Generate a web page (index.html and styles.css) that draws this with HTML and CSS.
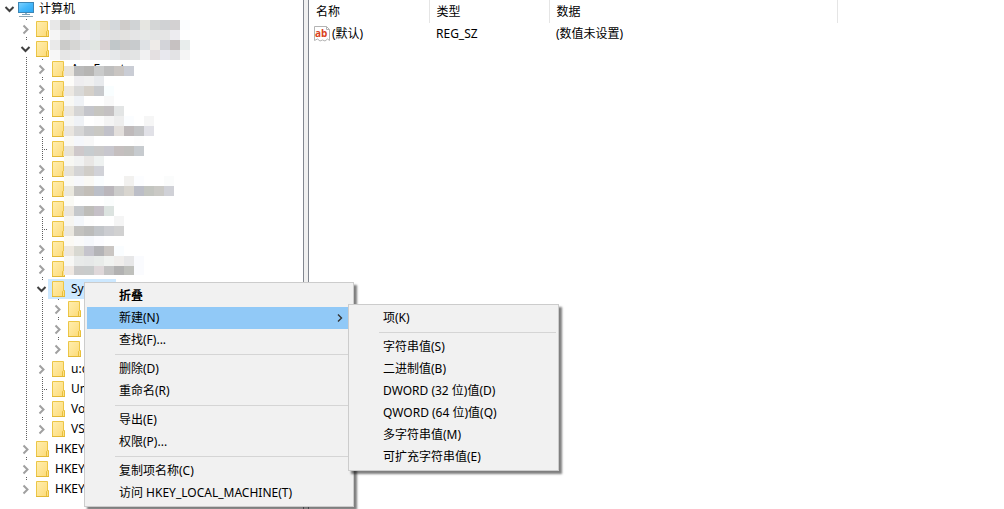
FILE: index.html
```html
<!DOCTYPE html>
<html lang="zh-CN">
<head>
    <meta charset="UTF-8">
    <meta name="viewport" content="width=device-width, initial-scale=1.0">
    <title>注册表编辑器</title>
    <link rel="stylesheet" href="styles.css">
</head>
<body>

    <!-- Shared icons -->
    <svg class="sprite" aria-hidden="true">
        <defs>
            <linearGradient id="folder-fill" x1="0" y1="0" x2="1" y2="1">
                <stop offset="0" stop-color="#ffeeb0"/>
                <stop offset="1" stop-color="#fddb78"/>
            </linearGradient>
            <linearGradient id="screen-fill" x1="0" y1="0" x2="1" y2="1">
                <stop offset="0" stop-color="#7fd2ff"/>
                <stop offset="0.5" stop-color="#45b8fb"/>
                <stop offset="1" stop-color="#2ba6f2"/>
            </linearGradient>
        </defs>
        <symbol id="folder" viewBox="0 0 16 16">
            <path d="M2.5 .5h11v9.5l-1 1v4.5h-10z" fill="url(#folder-fill)" stroke="#ecc646"/>
            <path d="M12.5 15.5v-5l1-1h1v6z" fill="#fde08a" stroke="#e8c03c"/>
            <path d="M2 15.5h13" stroke="#e3b935"/>
        </symbol>
        <symbol id="computer" viewBox="0 0 16 16">
            <rect x=".5" y="1.5" width="15" height="10" fill="url(#screen-fill)" stroke="#3d86b5"/>
            <path d="M7 12h2v1.5H7z" fill="#8fb3c8"/>
            <path d="M4 13.5h8" stroke="#7fa5bc"/>
            <path d="M1 15.5h14" stroke="#8da6b5"/>
        </symbol>
        <symbol id="closed" viewBox="0 0 16 16">
            <path d="M7.5 4.5l4 4-4 4" fill="none" stroke="#a0a0a0" stroke-width="2"/>
        </symbol>
        <symbol id="open" viewBox="0 0 16 16">
            <path d="M5.5 6l4 4 4-4" fill="none" stroke="#404040" stroke-width="2"/>
        </symbol>
    </svg>

    <main class="window">
        <nav class="tree-pane">
            <ul class="tree">
                <li>
                    <div class="row">
                        <button class="toggle" aria-label="折叠"><svg><use href="#open"/></svg></button>
                        <a class="label" href="#"><svg><use href="#computer"/></svg>计算机</a>
                    </div>
                    <ul>
                        <li>
                            <div class="row">
                                <button class="toggle" aria-label="展开"><svg><use href="#closed"/></svg></button>
                                <a class="label" href="#"><svg><use href="#folder"/></svg></a>
                            </div>
                        </li>
                        <li>
                            <div class="row">
                                <button class="toggle" aria-label="折叠"><svg><use href="#open"/></svg></button>
                                <a class="label" href="#"><svg><use href="#folder"/></svg></a>
                            </div>
                            <ul id="user-keys"></ul>
                        </li>
                        <li>
                            <div class="row">
                                <button class="toggle" aria-label="展开"><svg><use href="#closed"/></svg></button>
                                <a class="label" href="#"><svg><use href="#folder"/></svg>HKEY</a>
                            </div>
                        </li>
                        <li>
                            <div class="row">
                                <button class="toggle" aria-label="展开"><svg><use href="#closed"/></svg></button>
                                <a class="label" href="#"><svg><use href="#folder"/></svg>HKEY</a>
                            </div>
                        </li>
                        <li>
                            <div class="row">
                                <button class="toggle" aria-label="展开"><svg><use href="#closed"/></svg></button>
                                <a class="label" href="#"><svg><use href="#folder"/></svg>HKEY</a>
                            </div>
                        </li>
                    </ul>
                </li>
            </ul>
            <svg class="mosaic mosaic-roots" id="mosaic-roots" aria-hidden="true"></svg>
            <svg class="mosaic mosaic-keys" id="mosaic-keys" aria-hidden="true"></svg>
        </nav>

        <div class="splitter"></div>

        <section class="values-pane">
            <table class="values">
                <thead>
                    <tr>
                        <th class="col-name">名称</th>
                        <th class="col-type">类型</th>
                        <th class="col-data">数据</th>
                    </tr>
                </thead>
                <tbody>
                    <tr>
                        <td>
                            <div class="value-name">
                                <svg viewBox="0 0 16 16">
                                    <path d="M.5 .5h12l3 3v11l-2-1.5-2.5 2-2.5-1-2.5 1-2.5-2-3 1.500z" fill="#fff" stroke="#b4b4b4"/>
                                    <path d="M12.500 .5v3h3" fill="none" stroke="#b4b4b4"/>
                                    <text class="string-mark" x="1" y="11">ab</text>
                                </svg>
                                <span>(默认)</span>
                            </div>
                        </td>
                        <td>REG_SZ</td>
                        <td>(数值未设置)</td>
                    </tr>
                </tbody>
            </table>
        </section>
    </main>

    <!-- Context menu -->
    <ul class="menu context-menu">
        <li><button class="default">折叠</button></li>
        <li class="active">
            <button>新建(N)<svg class="arrow" viewBox="0 0 6 8"><path d="M1 .5l3.500 3.500L1 7.500" fill="none" stroke="#333" stroke-width="1.400"/></svg></button>
            <ul class="menu submenu">
                <li><button>项(K)</button></li>
                <li class="separator"></li>
                <li><button>字符串值(S)</button></li>
                <li><button>二进制值(B)</button></li>
                <li><button>DWORD (32 位)值(D)</button></li>
                <li><button>QWORD (64 位)值(Q)</button></li>
                <li><button>多字符串值(M)</button></li>
                <li><button>可扩充字符串值(E)</button></li>
            </ul>
        </li>
        <li><button>查找(F)...</button></li>
        <li class="separator"></li>
        <li><button>删除(D)</button></li>
        <li><button>重命名(R)</button></li>
        <li class="separator"></li>
        <li><button>导出(E)</button></li>
        <li><button>权限(P)...</button></li>
        <li class="separator"></li>
        <li><button>复制项名称(C)</button></li>
        <li><button>访问 HKEY_LOCAL_MACHINE(T)</button></li>
    </ul>

    <script src="script.js"></script>
</body>
</html>
```
FILE: styles.css
```css
* {
    box-sizing: border-box;
}

body {
    margin: 0;
    background: #fff;
    color: #000;
    font-family: "Noto Sans", "Noto Sans CJK SC", sans-serif;
    font-size: 12px;
    line-height: 20px;
    overflow: hidden;
}

ul {
    list-style: none;
    margin: 0;
    padding: 0;
}

button {
    font: inherit;
    color: inherit;
    background: none;
    border: none;
    padding: 0;
}

.sprite {
    position: absolute;
    width: 0;
    height: 0;
}

.window {
    display: flex;
    height: 100vh;
}

/* Key tree */
.tree-pane {
    position: relative;
    flex: 0 0 303px;
    overflow: hidden;
}

.tree {
    margin-top: -1px;
}

.tree ul {
    padding-left: 16px;
}

.tree ul > li {
    background: repeating-linear-gradient(#606060 0 1px, transparent 1px 2px) 10px 0 / 1px 100% no-repeat;
}

.tree ul > li:last-child {
    background-size: 1px 10px;
}

.row {
    display: flex;
    align-items: center;
    height: 20px;
}

.toggle {
    flex: 0 0 16px;
    height: 16px;
    background: #fff;
}

.toggle svg,
.label svg {
    display: block;
    flex: none;
    width: 16px;
    height: 16px;
}

.leaf {
    flex: 0 0 16px;
    height: 1px;
    background: repeating-linear-gradient(90deg, #606060 0 1px, transparent 1px 2px) 10px 0 / 6px 1px no-repeat;
}

.label {
    display: flex;
    align-items: center;
    gap: 5px;
    height: 20px;
    padding: 0 4px 0 2px;
    color: #000;
    text-decoration: none;
    white-space: nowrap;
}

.label.selected {
    background: #cce8ff;
}

.mosaic {
    position: absolute;
}

.mosaic-roots {
    left: 50px;
    top: 20px;
    width: 140px;
    height: 40px;
}

.mosaic-keys {
    left: 64px;
    top: 66px;
    width: 110px;
    height: 209px;
}

/* Divider between the panes */
.splitter {
    flex: 0 0 6px;
    background: #f0f0f0;
    border: solid #828790;
    border-width: 0 1px;
}

/* Value list */
.values-pane {
    flex: 1;
}

.values {
    border-collapse: collapse;
    table-layout: fixed;
    width: 529px;
}

.values th,
.values td {
    padding: 0 0 0 7px;
    font-weight: normal;
    text-align: left;
}

.values th {
    height: 23px;
    border-right: 1px solid #e5e5e5;
}

.values td {
    height: 21px;
}

.col-name,
.col-type {
    width: 120px;
}

.value-name {
    display: flex;
    align-items: center;
    gap: 2px;
    margin-left: -2px;
}

.value-name svg {
    width: 16px;
    height: 16px;
}

.string-mark {
    font: bold 10px "Open Sans", sans-serif;
    fill: #d9431e;
}

/* Menus */
.menu {
    position: absolute;
    padding: 2px;
    background: #f1f1f1;
    border: 1px solid #ccc;
    box-shadow: 3px 3px 2px rgba(0, 0, 0, 0.5);
}

.context-menu {
    left: 84px;
    top: 282px;
    width: 270px;
}

.submenu {
    left: calc(100% - 3px);
    top: -3px;
    width: 211px;
}

.menu li {
    position: relative;
}

/* keeps the submenu above the items that follow it */
.menu .active {
    z-index: 1;
}

.menu button {
    display: flex;
    align-items: center;
    justify-content: space-between;
    width: 100%;
    height: 22px;
    padding: 0 8px 0 32px;
    text-align: left;
    white-space: nowrap;
}

.menu .active > button {
    background: #91c9f7;
}

.menu .default {
    font-weight: bold;
}

.menu .separator {
    height: 1px;
    margin: 3px 0 3px 28px;
    background: #d5d5d5;
}

.arrow {
    width: 6px;
    height: 8px;
}
```
FILE: script.js
```javascript
// Keys below the opened hive: state is "closed", "open" or "leaf"
const userKeys = [
    { name: "AppEvents", state: "closed" },
    { name: "", state: "closed" },
    { name: "", state: "closed" },
    { name: "", state: "closed" },
    { name: "", state: "leaf" },
    { name: "", state: "closed" },
    { name: "", state: "closed" },
    { name: "", state: "closed" },
    { name: "", state: "leaf" },
    { name: "", state: "closed" },
    { name: "", state: "closed" },
    {
        name: "System", state: "open", selected: true,
        children: [
            { name: "", state: "closed" },
            { name: "", state: "closed" },
            { name: "", state: "closed" }
        ]
    },
    { name: "u:c", state: "closed" },
    { name: "Un", state: "leaf" },
    { name: "Vo", state: "closed" },
    { name: "VS", state: "closed" }
];

// Colours of the 10px tiles that hide private key names, "-" is an empty tile
const rootTiles = [
    "e8e8e8 cacac8 d5d5d3 dfe1e3 e0e5e2 dcdad7 d4d8db cfccca d0d3d5 e6e6e1 d4d6d6 d0d2d4 d3d1d2 fbfdff",
    "f5f5f5 e9e9e8 e6e6ea efecee e6e8ea e2e2e2 e0e0e0 e3e2e0 e5e5e6 e6e8e7 e4e5e5 e5e5e5 edecf0 -",
    "eaeaea cbcbc9 d6d6d4 dfe1e3 e1e6e2 d9d2d3 c1c7c9 c9c9c9 c8cbcd dfe2e5 eeebe8 d3d4d9 c6c1c1 e8edec",
    "f7f7f7 e6e6e6 e9e9ea efeded eaeaec ebebeb e6e8ea e2e2e2 e3e4e4 f1f1f2 e4e0e1 e8e8ee e3e3e5 f5f5f5"
];

const keyTiles = [
    "e8e4dd bababa b6b5b3 cacbcb bebebe c9c5c2 cacdd5",
    "fdfcf9 eeedef f0f0f0 e8eaed",
    "ece8e2 d9d9d8 d5d0c9 c8cacd f9feff",
    "f8f8f5 eff2f6 ffffff ffffff f9f9f9",
    "ebe7df d5d5d5 c4c5cb c6c5c0 c4c1c2 e3e5e5",
    "f6f6f3 eff2f6 ffffff fcfcfc f4f4f4 eeeeee fbfdff - f6f6f6",
    "e9e5df d6d6d6 c7c8ca c9c8c3 c1c1c9 e3dfdc bfbabb c3c4c6 e1e1e7",
    "f9f8f4 f5f7fb f8f8f8 - - - - fdfdfd",
    "e6e2d9 cec8ca c7cccf cbcaca c8c7ce c5bfbf c1c0be c7cbcf",
    "f7f7f3 f1f2f2 e9e7e5 eff2f1",
    "e5e2da d4d4d5 d0cdc8 d1d2d8",
    "f9f9f5 f7f8fb faf9f5 fafdff - - f2f1ef fcfdff - - fbfcfc",
    "eae8de c4c3c1 c2beb8 bbbfc8 bab6bb cccccb d8d5cf bcbec7 c3c5c0 cac9c5 d0d1d7",
    "fafaf5 - - - fbfdfd",
    "e9e5de c5c8cb bebdb9 c5c0c7 dce3e0",
    "f6f5f1 f4f7fb fdfdfd - - f5f5f5",
    "eae7df c3c2bf bcbcbb c2c5c9 cccdd1 d1d1d1",
    "fbf9f4 fafafa f6f8fc fcfcff",
    "ece7df d8d8d1 c5c4cc b4b4b7 cac6c3 fafdff",
    "f7f7f5 e8eae9 e6e8e8 e9ecea f1f3f1 f0eeec e7e7e8 fafbfe",
    "efe8e2 cacaca c8cbcb dfd8da c3c3c3 b2b2b2 bfc0bc fafbfe"
];

function renderKey(key) {
    const toggle = key.state === "leaf"
        ? '<span class="leaf"></span>'
        : `<button class="toggle" aria-label="${key.state === "open" ? "折叠" : "展开"}"><svg><use href="#${key.state}"/></svg></button>`;
    const children = key.children ? `<ul>${key.children.map(renderKey).join("")}</ul>` : "";

    return `<li>
        <div class="row">
            ${toggle}
            <a class="label${key.selected ? " selected" : ""}" href="#"><svg><use href="#folder"/></svg>${key.name}</a>
        </div>
        ${children}
    </li>`;
}

function renderTiles(id, rows) {
    let tiles = "";
    rows.forEach((row, y) => {
        row.split(" ").forEach((color, x) => {
            if (color !== "-") {
                tiles += `<rect x="${x * 10}" y="${y * 10}" width="10" height="10" fill="#${color}"/>`;
            }
        });
    });
    document.getElementById(id).innerHTML = tiles;
}

document.getElementById("user-keys").innerHTML = userKeys.map(renderKey).join("");
renderTiles("mosaic-roots", rootTiles);
renderTiles("mosaic-keys", keyTiles);
```
